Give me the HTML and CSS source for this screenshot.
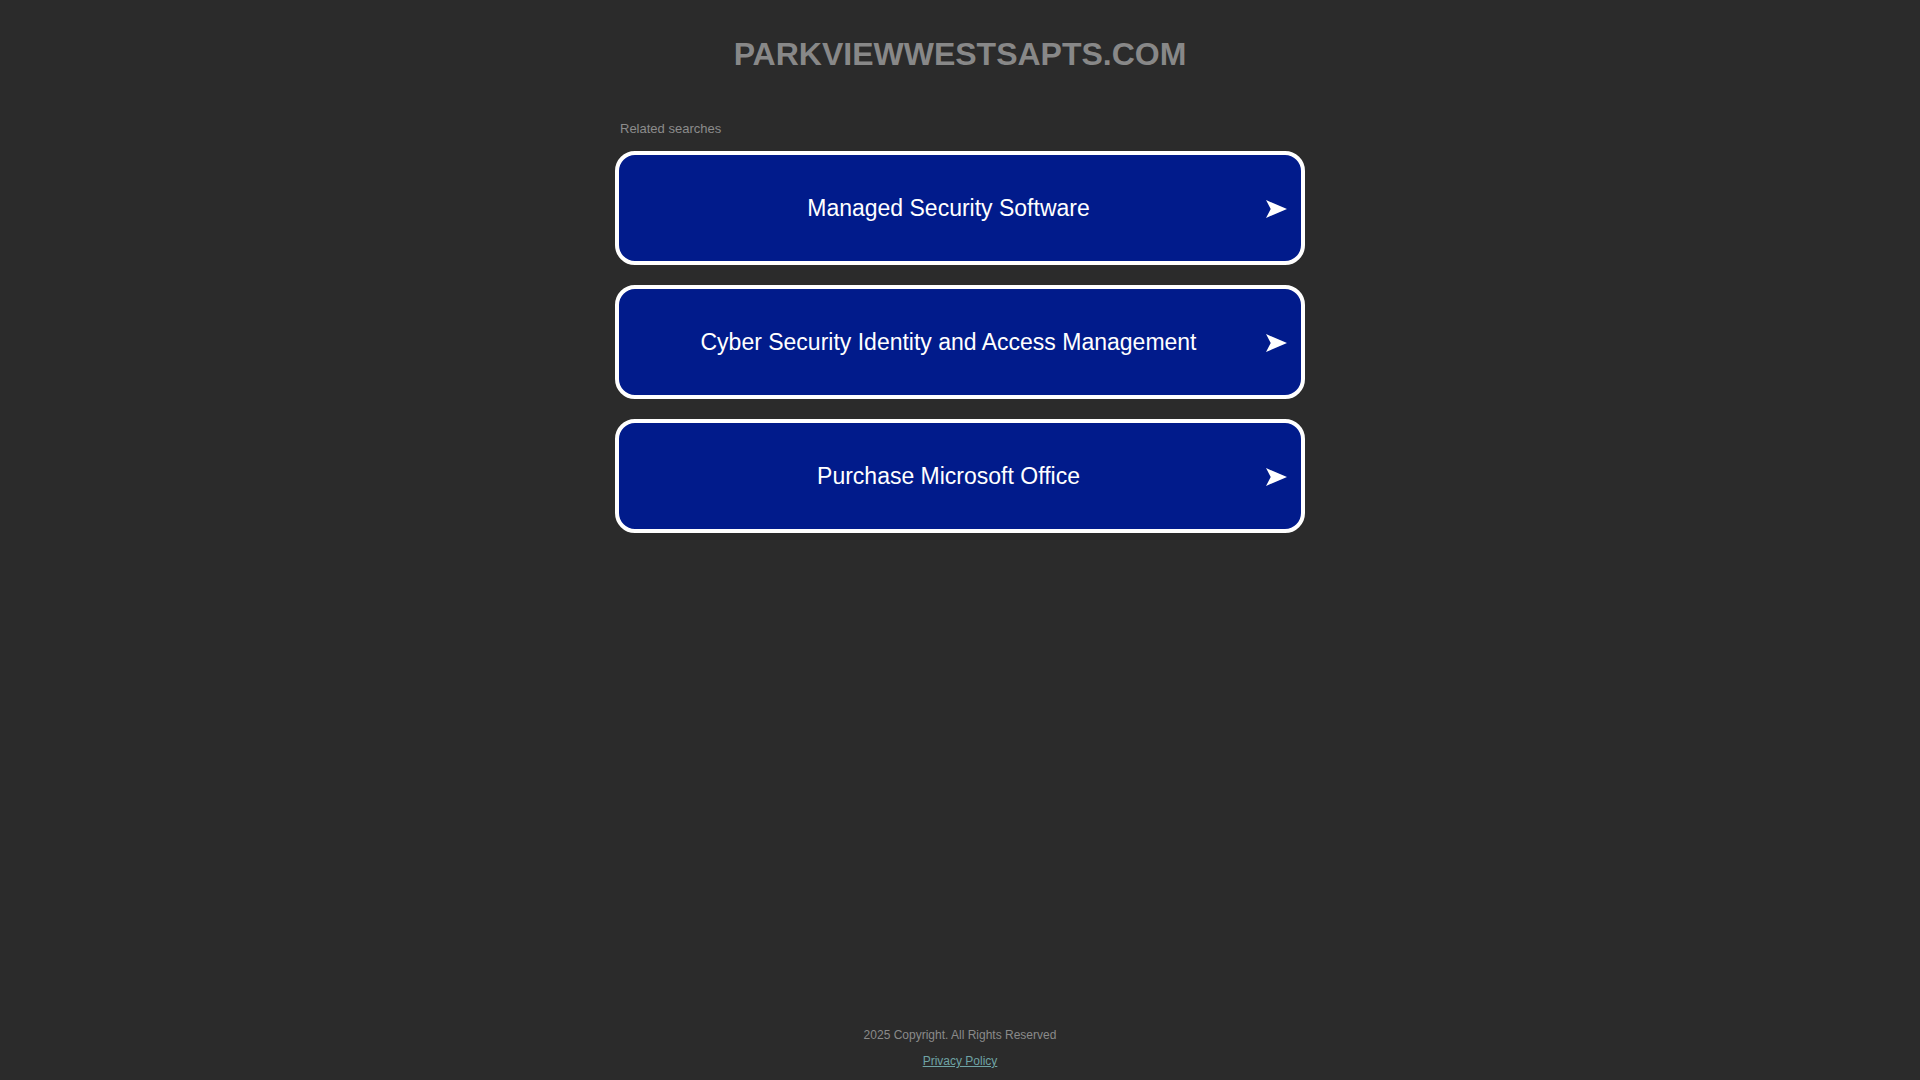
FILE: index.html
```html
<!DOCTYPE html>
<html lang="en">
<head>
<meta charset="utf-8">
<title>parkviewwestsapts.com</title>
<link rel="stylesheet" href="styles.css">
</head>
<body>
<div class="page">
  <header class="header">
    <h1 class="domain">PARKVIEWWESTSAPTS.COM</h1>
  </header>
  <main class="main">
    <div class="related">
      <div class="related-title">Related searches</div>
      <ul class="links">
        <li><a class="link" href="#"><span class="link-text">Managed Security Software</span><svg class="arrow" viewBox="0 0 20 17" aria-hidden="true"><path d="M0 0 L20 8.5 L0 17 L4.5 8.5 Z"/></svg></a></li>
        <li><a class="link" href="#"><span class="link-text">Cyber Security Identity and Access Management</span><svg class="arrow" viewBox="0 0 20 17" aria-hidden="true"><path d="M0 0 L20 8.5 L0 17 L4.5 8.5 Z"/></svg></a></li>
        <li><a class="link" href="#"><span class="link-text">Purchase Microsoft Office</span><svg class="arrow" viewBox="0 0 20 17" aria-hidden="true"><path d="M0 0 L20 8.5 L0 17 L4.5 8.5 Z"/></svg></a></li>
      </ul>
    </div>
  </main>
  <footer class="footer">
    <div class="copyright">2025 Copyright. All Rights Reserved</div>
    <a class="privacy" href="#">Privacy Policy</a>
  </footer>
</div>
</body>
</html>
```
FILE: styles.css
```css
html, body {
  margin: 0;
  padding: 0;
}
body {
  background: #2b2b2b;
  font-family: "Liberation Sans", Arial, sans-serif;
  color: #8a8a8a;
}
.page {
  min-height: 100vh;
  display: flex;
  flex-direction: column;
  align-items: center;
}
.header {
  padding-top: 36px;
}
.domain {
  margin: 0;
  font-size: 32px;
  line-height: 37px;
  font-weight: bold;
  color: #888888;
  text-align: center;
}
.main {
  flex: 1;
  width: 690px;
  padding-top: 48px;
}
.related-title {
  font-size: 13px;
  line-height: 15px;
  color: #8c8c8c;
  padding-left: 5px;
  margin-bottom: 15px;
}
.links {
  list-style: none;
  margin: 0;
  padding: 0;
  display: flex;
  flex-direction: column;
  gap: 20px;
}
.link {
  box-sizing: border-box;
  height: 114px;
  display: flex;
  align-items: center;
  padding: 1px 14px 0;
  background: #011b8b;
  border: 4px solid #ffffff;
  border-radius: 20px;
  color: #ffffff;
  text-decoration: none;
}
.link-text {
  flex: 1;
  text-align: center;
  font-size: 23px;
  line-height: 27px;
}
.arrow {
  width: 21px;
  height: 18px;
  margin-left: 2px;
  fill: #ffffff;
}
.footer {
  padding-bottom: 12px;
  text-align: center;
  font-size: 12px;
  line-height: 14px;
}
.copyright {
  color: #8a8a8a;
  margin-bottom: 12px;
}
.privacy {
  color: #6fa3a5;
  text-decoration: underline;
}
```
